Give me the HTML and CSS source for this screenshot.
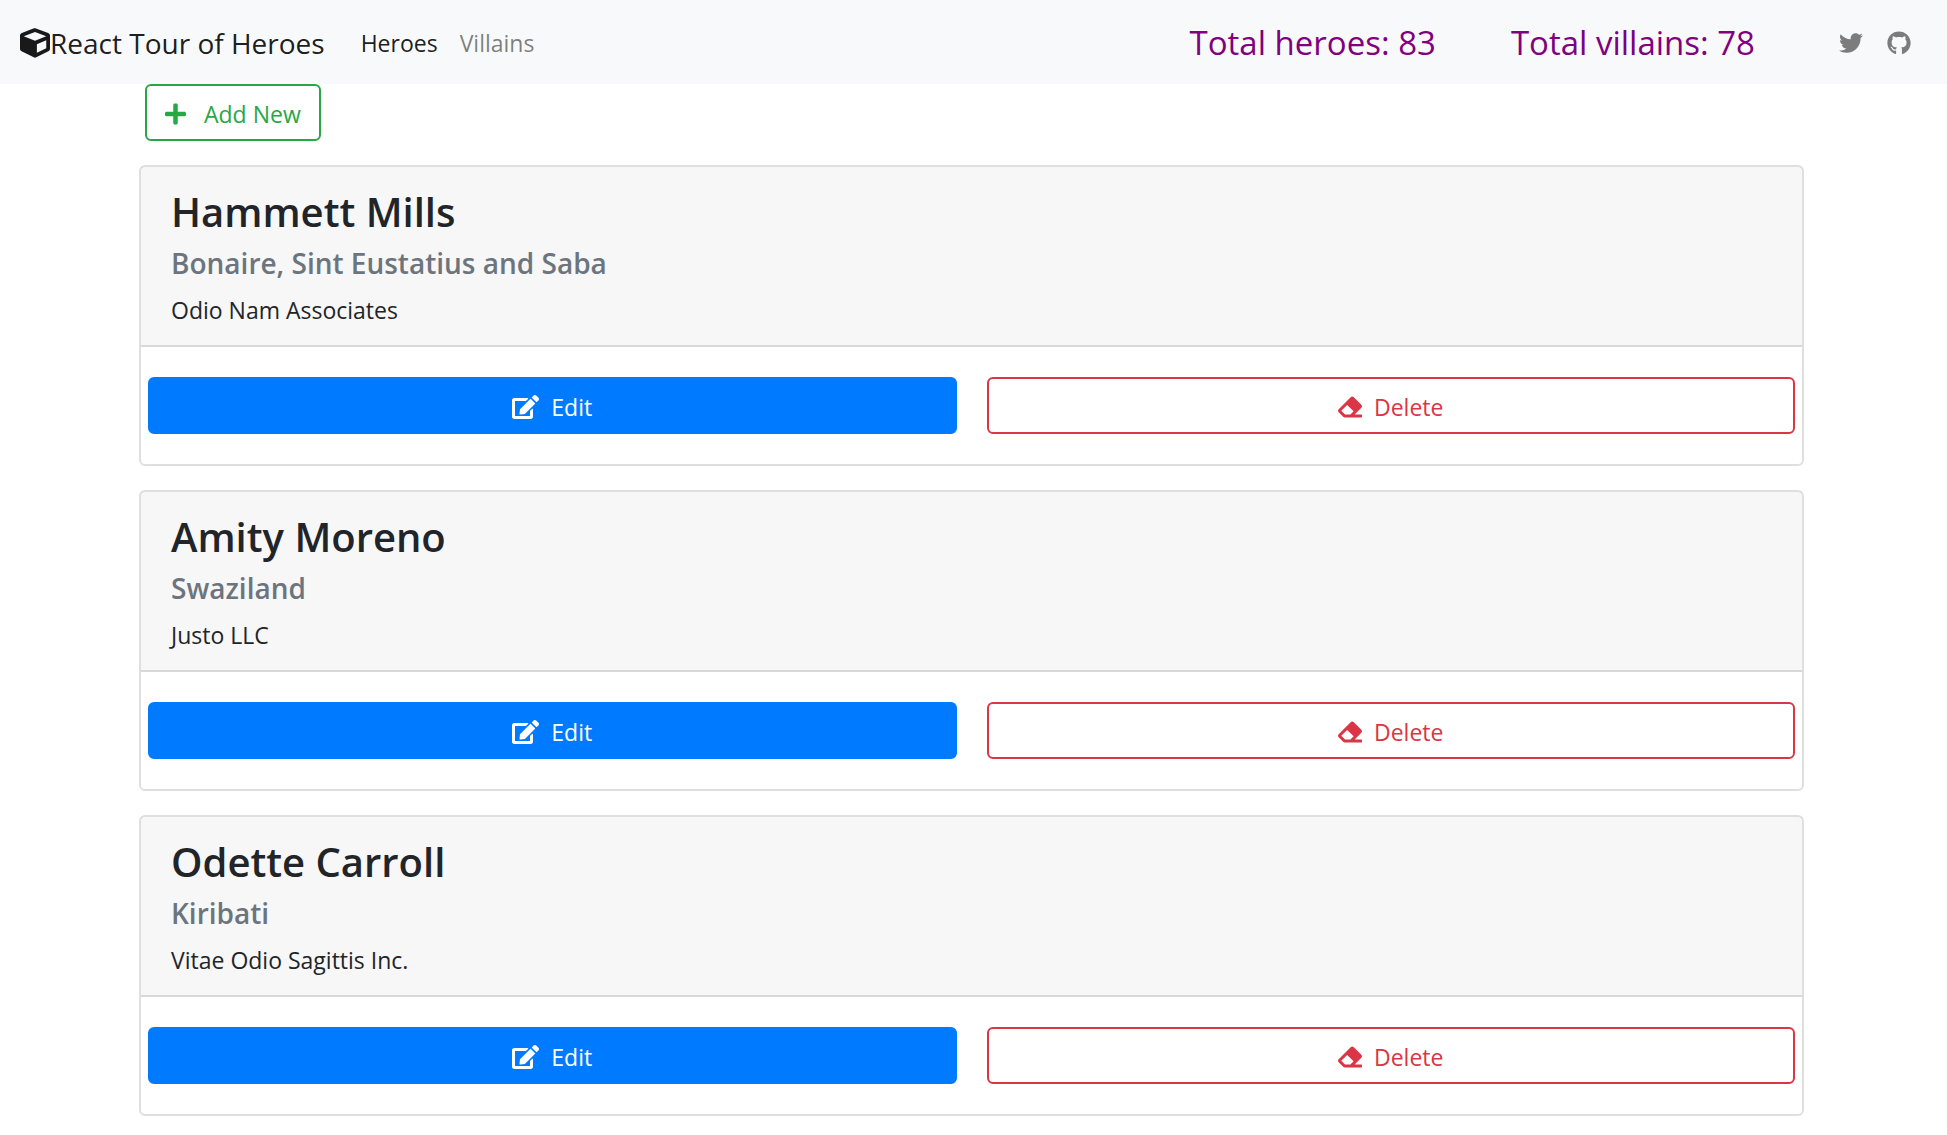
FILE: index.html
```html
<!DOCTYPE html>
<html lang="en">
<head>
<meta charset="utf-8">
<meta name="viewport" content="width=device-width, initial-scale=1">
<title>React Tour of Heroes</title>
<link rel="stylesheet" href="styles.css">
</head>
<body>
<svg class="sprite" aria-hidden="true">
  <symbol id="cube" viewBox="0 0 512 512"><path d="M239.1 6.3l-208 78c-18.7 7-31.1 25-31.1 45v225.1c0 18.2 10.3 34.8 26.5 42.9l208 104c13.5 6.8 29.4 6.8 42.9 0l208-104c16.3-8.1 26.5-24.8 26.5-42.9V129.3c0-20-12.4-37.9-31.1-44.9l-208-78C262 2.2 250 2.2 239.1 6.3zM256 68.4l192 72v1.1l-192 78-192-78v-1.1l192-72zm32 356V275.5l160-65v133.9l-160 80z"/></symbol>
  <symbol id="plus" viewBox="0 0 448 512"><path d="M416 208H272V64c0-17.67-14.33-32-32-32h-32c-17.67 0-32 14.33-32 32v144H32c-17.67 0-32 14.33-32 32v32c0 17.67 14.33 32 32 32h144v144c0 17.67 14.33 32 32 32h32c17.67 0 32-14.33 32-32V304h144c17.67 0 32-14.33 32-32v-32c0-17.67-14.33-32-32-32z"/></symbol>
  <symbol id="edit" viewBox="0 0 576 512"><path d="M402.6 83.2l90.2 90.2c3.8 3.8 3.8 10 0 13.8L274.4 405.6l-92.8 10.3c-12.4 1.4-22.9-9.1-21.5-21.5l10.3-92.8L388.8 83.2c3.8-3.8 10-3.8 13.8 0zm162-22.9l-48.8-48.8c-15.2-15.2-39.9-15.2-55.2 0l-35.4 35.4c-3.8 3.8-3.8 10 0 13.8l90.2 90.2c3.8 3.8 10 3.8 13.8 0l35.4-35.4c15.2-15.3 15.2-40 0-55.2zM384 346.2V448H64V128h229.8c3.2 0 6.2-1.3 8.5-3.5l40-40c7.6-7.6 2.2-20.5-8.5-20.5H48C21.5 64 0 85.5 0 112v352c0 26.5 21.5 48 48 48h352c26.5 0 48-21.5 48-48V306.2c0-10.7-12.9-16-20.5-8.5l-40 40c-2.2 2.3-3.5 5.3-3.5 8.5z"/></symbol>
  <symbol id="eraser" viewBox="0 0 512 512"><path d="M497.941 273.941c18.745-18.745 18.745-49.137 0-67.882l-160-160c-18.745-18.745-49.136-18.746-67.883 0l-256 256c-18.745 18.745-18.745 49.137 0 67.882l96 96A48.004 48.004 0 0 0 144 480h356c6.627 0 12-5.373 12-12v-40c0-6.627-5.373-12-12-12H355.883l142.058-142.059zm-302.627-62.627l137.373 137.373L265.373 416H150.628l-80-80 124.686-124.686z"/></symbol>
  <symbol id="twitter" viewBox="0 0 512 512"><path d="M459.37 151.716c.325 4.548.325 9.097.325 13.645 0 138.72-105.583 298.558-298.558 298.558-59.452 0-114.68-17.219-161.137-47.106 8.447.974 16.568 1.299 25.34 1.299 49.055 0 94.213-16.568 130.274-44.832-46.132-.975-84.792-31.188-98.112-72.772 6.498.974 12.995 1.624 19.818 1.624 9.421 0 18.843-1.3 27.614-3.573-48.081-9.747-84.143-51.98-84.143-102.985v-1.299c13.969 7.797 30.214 12.67 47.431 13.319-28.264-18.843-46.781-51.005-46.781-87.391 0-19.492 5.197-37.36 14.294-52.954 51.655 63.675 129.3 105.258 216.365 109.807-1.624-7.797-2.599-15.918-2.599-24.04 0-57.828 46.782-104.934 104.934-104.934 30.213 0 57.502 12.67 76.67 33.137 23.715-4.548 46.456-13.32 66.599-25.34-7.798 24.366-24.366 44.833-46.132 57.827 21.117-2.273 41.584-8.122 60.426-16.243-14.292 20.791-32.161 39.308-52.628 54.253z"/></symbol>
  <symbol id="github" viewBox="0 0 496 512"><path d="M165.9 397.4c0 2-2.3 3.6-5.2 3.6-3.3.3-5.6-1.3-5.6-3.6 0-2 2.3-3.6 5.2-3.6 3-.3 5.6 1.3 5.6 3.6zm-31.1-4.5c-.7 2 1.3 4.3 4.3 4.9 2.6 1 5.6 0 6.200-2s-1.300-4.300-4.300-5.200c-2.600-.7-5.500.3-6.200 2.300zm44.200-1.700c-2.900.7-4.900 2.600-4.600 4.900.3 2 2.900 3.300 5.900 2.600 2.900-.7 4.900-2.600 4.600-4.600-.3-1.900-3-3.200-5.900-2.900zM244.800 8C106.100 8 0 113.300 0 252c0 110.900 69.800 205.800 169.500 239.200 12.800 2.300 17.300-5.600 17.300-12.100 0-6.200-.3-40.400-.3-61.400 0 0-70 15-84.700-29.800 0 0-11.400-29.100-27.800-36.600 0 0-22.900-15.700 1.600-15.400 0 0 24.900 2 38.600 25.800 21.900 38.600 58.600 27.500 72.900 20.900 2.300-16 8.800-27.100 16-33.700-55.900-6.200-112.300-14.300-112.300-110.500 0-27.500 7.600-41.300 23.600-58.900-2.600-6.500-11.100-33.300 2.600-67.900 20.900-6.500 69 27 69 27 20-5.600 41.500-8.500 62.800-8.500s42.800 2.900 62.800 8.500c0 0 48.100-33.600 69-27 13.700 34.700 5.200 61.400 2.600 67.900 16 17.700 25.800 31.500 25.800 58.900 0 96.500-58.900 104.200-114.800 110.500 9.200 7.900 17 22.900 17 46.400 0 33.700-.3 75.400-.3 83.600 0 6.500 4.600 14.400 17.300 12.100C428.200 457.800 496 362.900 496 252 496 113.300 383.500 8 244.800 8z"/></symbol>
</svg>

<nav class="navbar">
  <a class="brand" href="#"><svg class="brand-icon"><use href="#cube"/></svg>React Tour of Heroes</a>
  <div class="nav-links">
    <a class="nav-link active" href="#heroes">Heroes</a>
    <a class="nav-link" href="#villains">Villains</a>
  </div>
  <div class="totals">
    <span>Total heroes: 83</span>
    <span>Total villains: 78</span>
  </div>
  <div class="social">
    <a href="#twitter" aria-label="Twitter"><svg class="icon"><use href="#twitter"/></svg></a>
    <a href="#github" aria-label="GitHub"><svg class="icon"><use href="#github"/></svg></a>
  </div>
</nav>

<main class="container">
  <button class="btn btn-add" type="button"><svg class="icon icon-narrow"><use href="#plus"/></svg>Add New</button>

  <article class="card">
    <header class="card-header">
      <h3 class="card-title">Hammett Mills</h3>
      <h5 class="card-subtitle">Bonaire, Sint Eustatius and Saba</h5>
      <p class="card-text">Odio Nam Associates</p>
    </header>
    <div class="card-actions">
      <button class="btn btn-edit" type="button"><svg class="icon icon-wide"><use href="#edit"/></svg>Edit</button>
      <button class="btn btn-delete" type="button"><svg class="icon"><use href="#eraser"/></svg>Delete</button>
    </div>
  </article>

  <article class="card">
    <header class="card-header">
      <h3 class="card-title">Amity Moreno</h3>
      <h5 class="card-subtitle">Swaziland</h5>
      <p class="card-text">Justo LLC</p>
    </header>
    <div class="card-actions">
      <button class="btn btn-edit" type="button"><svg class="icon icon-wide"><use href="#edit"/></svg>Edit</button>
      <button class="btn btn-delete" type="button"><svg class="icon"><use href="#eraser"/></svg>Delete</button>
    </div>
  </article>

  <article class="card">
    <header class="card-header">
      <h3 class="card-title">Odette Carroll</h3>
      <h5 class="card-subtitle">Kiribati</h5>
      <p class="card-text">Vitae Odio Sagittis Inc.</p>
    </header>
    <div class="card-actions">
      <button class="btn btn-edit" type="button"><svg class="icon icon-wide"><use href="#edit"/></svg>Edit</button>
      <button class="btn btn-delete" type="button"><svg class="icon"><use href="#eraser"/></svg>Delete</button>
    </div>
  </article>
</main>
</body>
</html>
```
FILE: styles.css
```css
* {
  box-sizing: border-box;
}

body {
  margin: 0;
  background: #fff;
  color: #212529;
  font-family: "Segoe UI", "Open Sans", "Noto Sans", sans-serif;
  font-size: 23px;
  line-height: 36px;
}

a {
  color: inherit;
  text-decoration: none;
}

.sprite {
  display: none;
}

.icon {
  width: 24px;
  height: 24px;
  fill: currentColor;
}

.icon-wide {
  width: 27px;
}

.icon-narrow {
  width: 21px;
}

/* Top bar */
.navbar {
  display: flex;
  align-items: center;
  min-height: 84px;
  padding: 14px 36px 12px 20px;
  background: #f8f9fa;
}

.brand {
  display: flex;
  align-items: center;
  margin-right: 36px;
  color: rgba(0, 0, 0, 0.9);
  font-size: 28px;
}

.brand-icon {
  width: 30px;
  height: 30px;
  fill: currentColor;
}

.nav-links {
  display: flex;
  gap: 22px;
}

.nav-link {
  color: rgba(0, 0, 0, 0.5);
}

.nav-link.active {
  color: rgba(0, 0, 0, 0.9);
}

.totals {
  display: flex;
  gap: 75px;
  margin-left: auto;
  color: purple;
  font-size: 33px;
}

.social {
  display: flex;
  gap: 24px;
  margin-left: 84px;
  color: rgba(0, 0, 0, 0.5);
}

.social a {
  display: flex;
}

/* Hero list */
.container {
  max-width: 1669px;
  margin: 0 auto;
  padding-right: 4px;
}

.btn {
  display: flex;
  align-items: center;
  justify-content: center;
  gap: 12px;
  height: 57px;
  padding: 2px 18px 0;
  border: 2px solid;
  border-radius: 6px;
  background: transparent;
  font: inherit;
  cursor: pointer;
}

.btn-add {
  gap: 18px;
  margin-left: 6px;
  color: #28a745;
}

.card {
  margin-top: 24px;
  border: 2px solid rgba(0, 0, 0, 0.125);
  border-radius: 6px;
}

.card-header {
  padding: 20px 30px 17px;
  border-bottom: 2px solid rgba(0, 0, 0, 0.125);
  background: rgba(0, 0, 0, 0.03);
}

.card-title,
.card-subtitle,
.card-text {
  margin: 0;
}

.card-title {
  margin-bottom: 8px;
  font-size: 40px;
  font-weight: 600;
  line-height: 50px;
}

.card-subtitle {
  margin-bottom: 11px;
  color: #6c757d;
  font-size: 28px;
  font-weight: 600;
}

.card-actions {
  display: flex;
  gap: 30px;
  padding: 30px 7px;
}

.card-actions .btn {
  flex: 1;
}

.btn-edit {
  border-color: #007bff;
  background: #007bff;
  color: #fff;
}

.btn-delete {
  color: #dc3545;
}
```
